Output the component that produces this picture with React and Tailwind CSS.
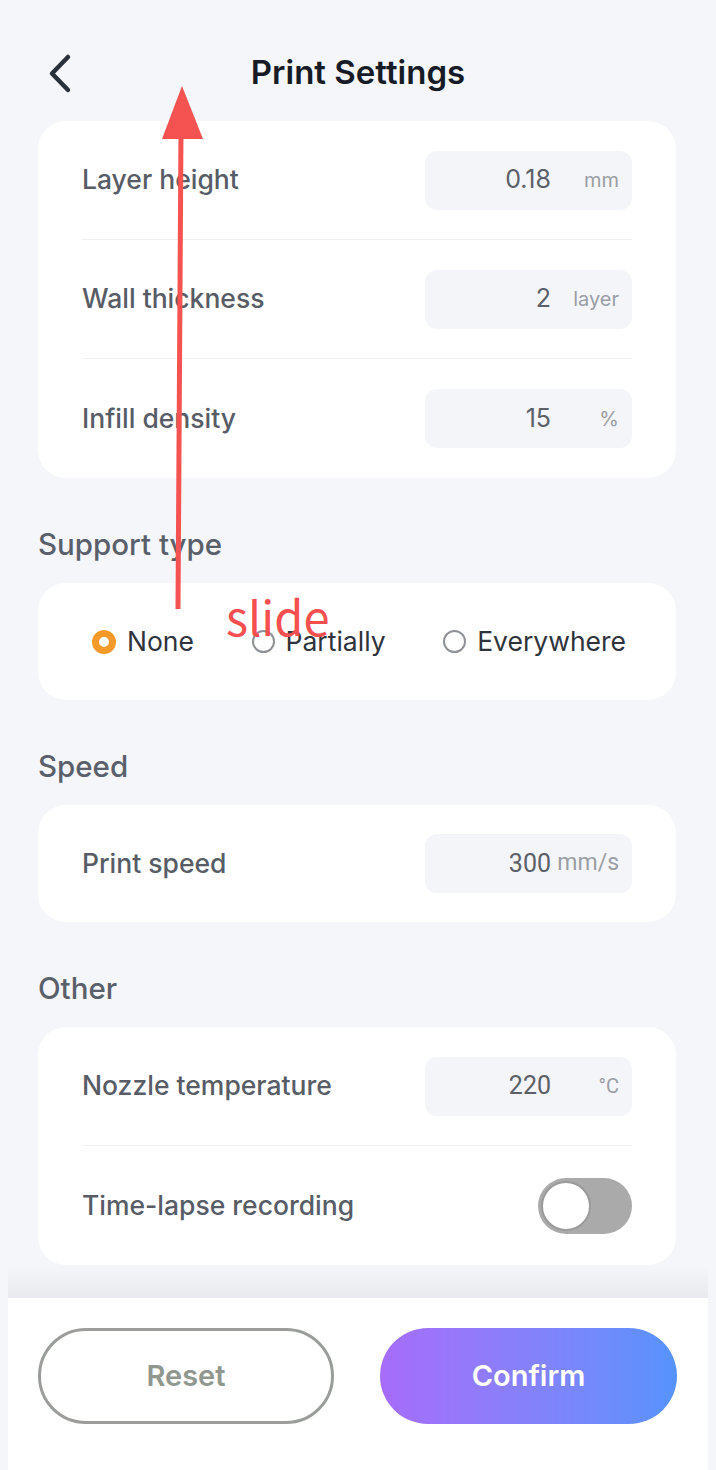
const font = { fontFamily: "Inter, 'Noto Sans', sans-serif" };

function ValueBox({ value, unit, unitSize = "text-[20px]", mono }) {
  return (
    <div
      className="flex h-[59px] w-[207px] items-center justify-end rounded-[12px] bg-[#f4f5f9] pr-[13px]"
      style={mono ? { fontFamily: "Roboto, sans-serif" } : undefined}
    >
      <span className="text-[25px] text-[#5b6069]">{value}</span>
      <span className={`w-[68px] text-right text-[#9a9ea5] ${unitSize}`}>{unit}</span>
    </div>
  );
}

function Row({ label, children, last }) {
  return (
    <div className={`flex h-[119px] items-center justify-between ${last ? "" : "border-b border-[#eff0f3]"}`}>
      <span className="text-[26.5px] font-medium text-[#575c66]">{label}</span>
      {children}
    </div>
  );
}

function Heading({ children }) {
  return <h2 className="mx-[38px] mb-[19px] mt-[48px] h-[38px] text-[29.5px] font-medium leading-[36px] text-[#5a606b]">{children}</h2>;
}

function Card({ className = "", children }) {
  return <section className={`ml-[38px] mr-[40px] rounded-[28px] bg-white ${className}`}>{children}</section>;
}

function Radio({ label, checked }) {
  return (
    <div className="flex items-center gap-[11px]">
      {checked ? (
        <span className="h-[24px] w-[24px] rounded-full border-[7px] border-[#f39a2b] bg-white" />
      ) : (
        <span className="h-[23px] w-[23px] rounded-full border-[2px] border-[#8e9196] bg-white" />
      )}
      <span className="text-[26.5px] text-[#2e333c]">{label}</span>
    </div>
  );
}

export default function App() {
  return (
    <div className="relative flex h-[1470px] w-[716px] flex-col overflow-hidden bg-[#f5f6fa]" style={font}>
      <header className="relative flex h-[121px] items-center justify-center pt-[25px]">
        <svg className="absolute left-[45px] top-[53px]" width="30" height="42" viewBox="0 0 30 42" fill="none">
          <path d="M23 4 L7 20.5 L23 37" stroke="#2b313b" strokeWidth="4.5" strokeLinecap="round" strokeLinejoin="round" />
        </svg>
        <h1 className="text-[33px] font-semibold text-[#161b26]">Print Settings</h1>
      </header>

      <Card className="px-[44px]">
        <Row label="Layer height">
          <ValueBox value="0.18" unit="mm" />
        </Row>
        <Row label="Wall thickness">
          <ValueBox value="2" unit="layer" />
        </Row>
        <Row label="Infill density" last>
          <ValueBox value="15" unit="%" />
        </Row>
      </Card>

      <Heading>Support type</Heading>
      <Card className="flex h-[117px] items-center justify-between pl-[54px] pr-[50px]">
        <Radio label="None" checked />
        <Radio label="Partially" />
        <Radio label="Everywhere" />
      </Card>

      <Heading>Speed</Heading>
      <Card className="px-[44px]">
        <div className="flex h-[117px] items-center justify-between">
          <span className="text-[26.5px] font-medium text-[#575c66]">Print speed</span>
          <ValueBox value="300" unit="mm/s" unitSize="text-[23px]" mono />
        </div>
      </Card>

      <Heading>Other</Heading>
      <Card className="px-[44px]">
        <Row label="Nozzle temperature">
          <ValueBox value="220" unit="°C" mono />
        </Row>
        <Row label="Time-lapse recording" last>
          <div className="flex h-[56px] w-[94px] items-center rounded-full bg-[#aaaaaa] p-[3px]">
            <span className="h-[50px] w-[50px] rounded-full border-[2px] border-[#9a9a9a] bg-white" />
          </div>
        </Row>
      </Card>

      <div className="mx-[8px] h-[33px] bg-gradient-to-b from-[#f5f6f9] to-[#e9eaee]" />
      <footer className="mx-[8px] flex flex-1 gap-[46px] bg-white px-[30px] pt-[30px]">
        <button className="h-[96px] w-[296px] rounded-full border-[3px] border-[#9a9e9a] text-[29px] font-semibold text-[#8f978f]">Reset</button>
        <button className="h-[96px] w-[297px] rounded-full bg-gradient-to-r from-[#a66cfa] to-[#5593fc] text-[29px] font-semibold text-white">Confirm</button>
      </footer>

      <svg className="pointer-events-none absolute left-0 top-0" width="716" height="700" viewBox="0 0 716 700">
        <line x1="178" y1="609" x2="181" y2="130" stroke="#f55252" strokeWidth="5" />
        <polygon points="182,86 162,139 203,139" fill="#f55252" />
      </svg>
      <span className="pointer-events-none absolute left-[226px] top-[587px] text-[47px] leading-[58px] text-[#f54f4f]" style={{ fontFamily: "'Noto Sans CJK SC', sans-serif" }}>slide</span>
    </div>
  );
}
